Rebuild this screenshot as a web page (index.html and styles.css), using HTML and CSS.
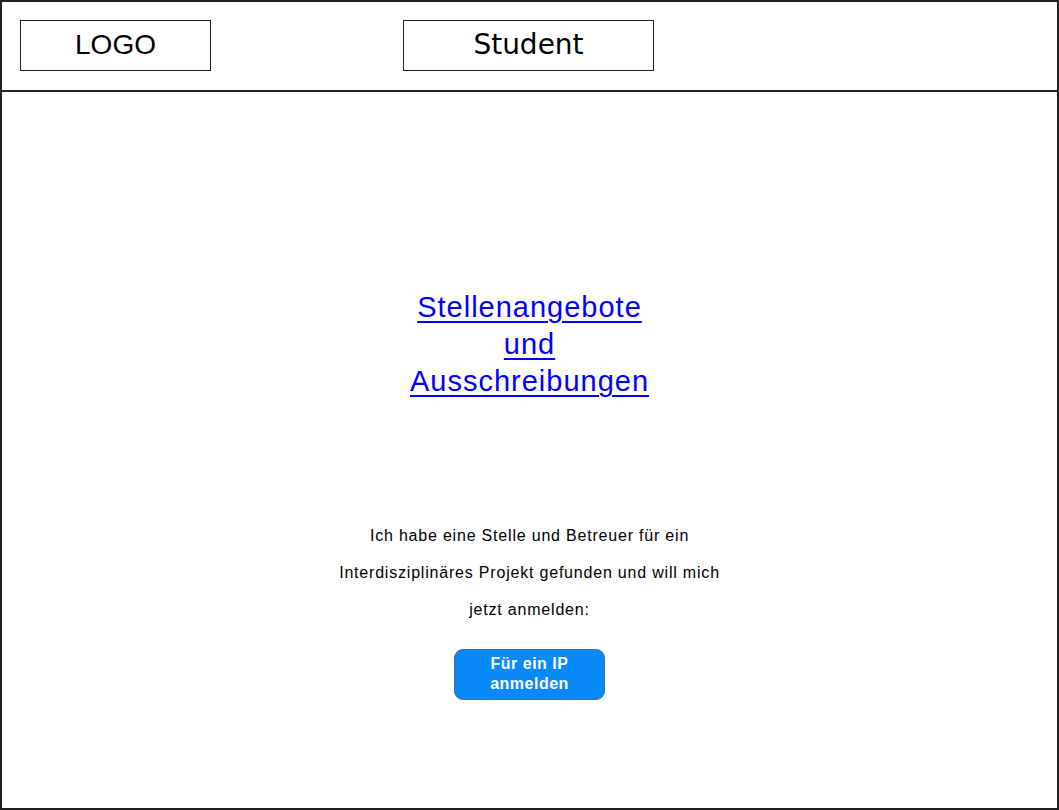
FILE: index.html
```html
<!DOCTYPE html>
<html lang="de">
<head>
<meta charset="utf-8">
<title>Student</title>
<link rel="stylesheet" href="styles.css">
</head>
<body>
<div class="frame">
  <header class="header">
    <div class="box logo">LOGO</div>
    <div class="box student">Student</div>
  </header>
  <main class="main">
    <a class="offers" href="#">Stellenangebote<br>und<br>Ausschreibungen</a>
    <p class="info">Ich habe eine Stelle und Betreuer für ein<br>Interdisziplinäres Projekt gefunden und will mich<br>jetzt anmelden:</p>
    <button class="register" type="button">Für ein IP<br>anmelden</button>
  </main>
</div>
</body>
</html>
```

FILE: styles.css
```css
* { box-sizing: border-box; }
html, body { margin: 0; padding: 0; background: #fff; }
body { font-family: "Liberation Sans", Arial, sans-serif; color: #000; }

.frame {
  width: 1059px;
  height: 810px;
  display: flex;
  flex-direction: column;
  border: 2px solid #222;
}

.header {
  height: 90px;
  flex: none;
  display: flex;
  align-items: flex-start;
  padding: 18px 0 0 18px;
  gap: 192px;
  border-bottom: 2px solid #222;
}
.box {
  height: 51px;
  display: flex;
  align-items: center;
  justify-content: center;
  border: 1px solid #222;
  font-size: 26px;
  padding-bottom: 2px;
}
.logo { width: 191px; font-family: "Liberation Sans", Arial, sans-serif; font-size: 28px; }
.student { width: 251px; font-family: "DejaVu Sans", "Liberation Sans", sans-serif; font-size: 28px; }

.main {
  flex: 1;
  display: flex;
  flex-direction: column;
  align-items: center;
  padding-top: 197px;
}
.offers {
  display: block;
  text-align: center;
  color: #0000ff;
  font-size: 29px;
  letter-spacing: 1px;
  line-height: 37px;
  text-decoration: underline;
  text-decoration-thickness: 2px;
  text-underline-offset: 4px;
}
.info {
  margin: 117px 0 0;
  text-align: center;
  font-size: 16px;
  letter-spacing: 0.8px;
  line-height: 37px;
}
.register {
  margin-top: 21px;
  width: 151px;
  height: 51px;
  background: #0a8af8;
  border: 1px solid #3a6ea8;
  border-radius: 9px;
  color: #fff;
  font-family: "Liberation Sans", Arial, sans-serif;
  font-weight: bold;
  font-size: 16px;
  letter-spacing: 0.5px;
  line-height: 20px;
  padding: 0 0 2px;
}
```
